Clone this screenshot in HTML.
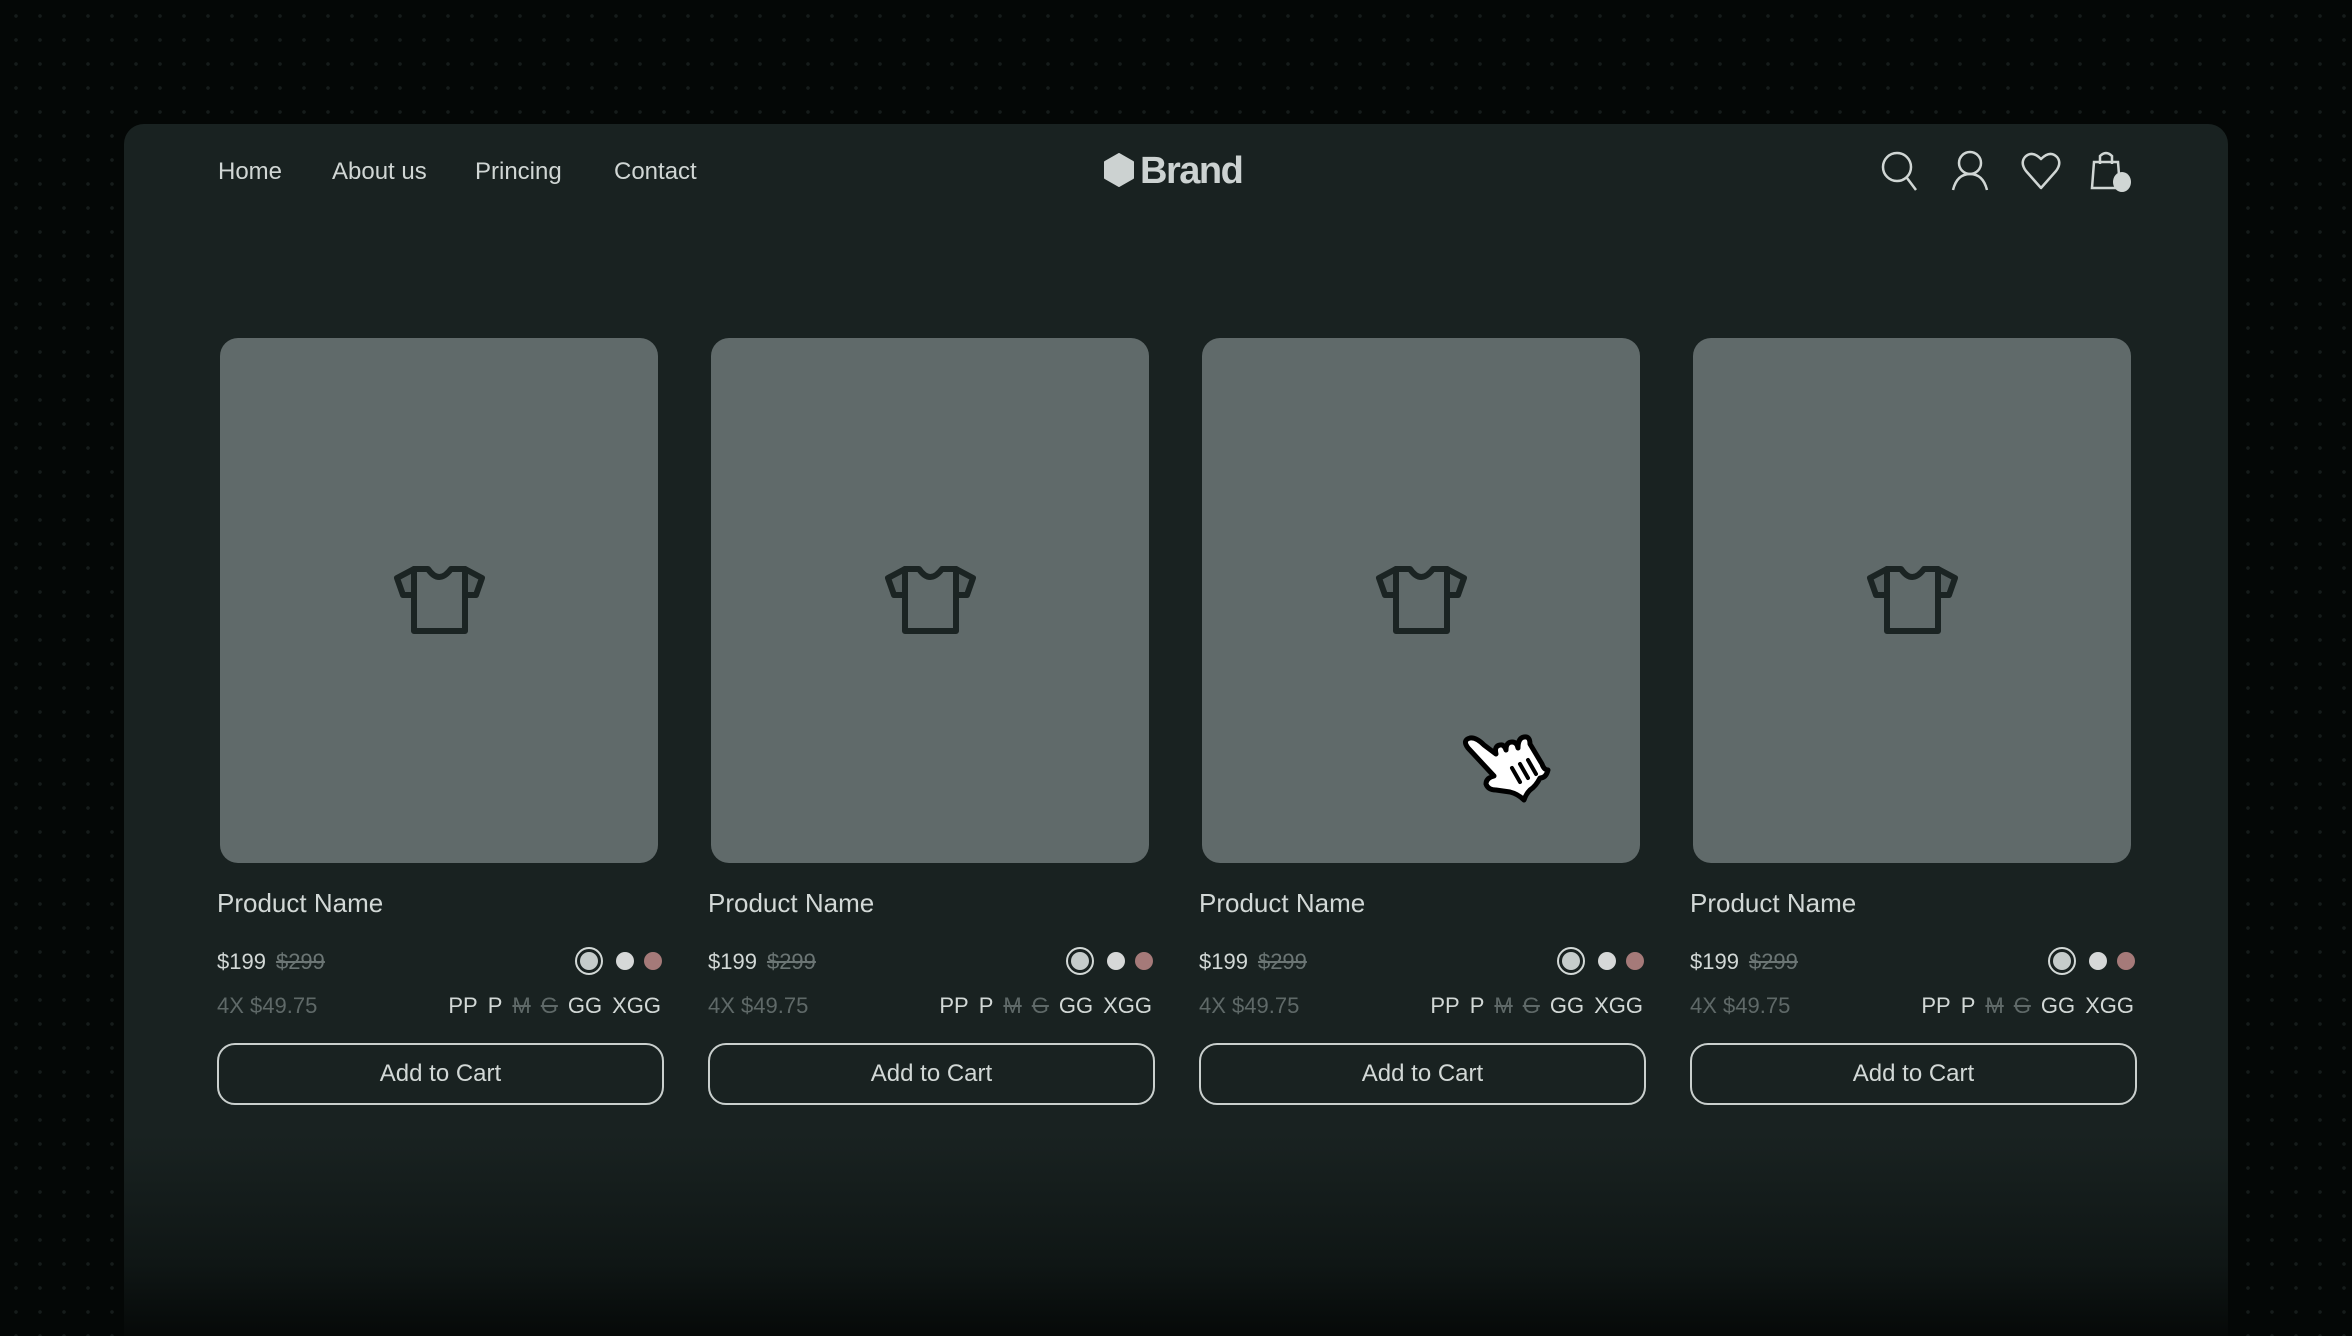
<!DOCTYPE html>
<html style="overflow:hidden"><head><meta charset="utf-8"><style>
*{margin:0;padding:0;box-sizing:border-box}
html,body{width:2352px;height:1336px;overflow:hidden}
body{background:#040706;font-family:"Liberation Sans",sans-serif;position:relative;
background-image:radial-gradient(circle,#161c1b 1.6px,transparent 2px);background-size:24px 24px;background-position:4px 4px}
.panel{position:absolute;left:124px;top:124px;width:2104px;height:1212px;border-radius:20px 20px 0 0;
background:linear-gradient(to bottom,#192221 0,#192221 1010px,#0f1615 1140px,#060908 1212px)}
.nav a{position:absolute;top:158px;color:#d0d6d4;font-size:24px;text-decoration:none}
.brand{position:absolute;left:1104px;top:150px;color:#ccd2d1;font-size:38px;font-weight:bold;letter-spacing:-1.5px}
.brand svg{vertical-align:-4px;margin-right:6px}
.icon{position:absolute;top:150px}
.card{position:absolute;top:338px;width:445px;height:770px}
.img{position:absolute;left:0;top:0;width:438px;height:525px;border-radius:18px;background:#606a6a}
.img svg{position:absolute;left:173px;top:227px}
.name{position:absolute;left:-3px;top:550px;color:#d2d8d6;font-size:26px}
.price{position:absolute;left:-3px;top:611px;font-size:22px;color:#d2d8d6}
.price s{color:#6b7574;margin-left:10px}
.inst{position:absolute;left:-3px;top:655px;font-size:22px;color:#5f6968}
.sizes{position:absolute;right:4px;top:655px;font-size:22px;color:#d2d8d6}
.sizes span{margin-left:10px}
.sizes s{color:#5f6968;margin-left:10px}
.sw{position:absolute;border-radius:50%}
.btn{position:absolute;left:-3px;top:705px;width:447px;height:62px;border:2px solid #c9cfcd;border-radius:18px;color:#d2d8d6;font-size:24px;text-align:center;line-height:58px}
</style></head><body>
<div class="panel"></div>
<div class="nav"><a style="left:218px">Home</a><a style="left:332px">About us</a><a style="left:475px">Princing</a><a style="left:614px">Contact</a></div>
<div class="brand"><svg width="30" height="34" viewBox="0 0 30 34"><path d="M15 1 L29 9 L29 25 L15 33 L1 25 L1 9 Z" fill="#ccd2d1" stroke="#ccd2d1" stroke-width="2" stroke-linejoin="round"/></svg>Brand</div>
<svg class="icon" style="left:1880px" width="40" height="42" viewBox="0 0 40 42" fill="none" stroke="#d0d6d4" stroke-width="2.5"><circle cx="17" cy="17" r="14"/><line x1="27" y1="28" x2="36" y2="40"/></svg>
<svg class="icon" style="left:1950px" width="40" height="42" viewBox="0 0 40 42" fill="none" stroke="#d0d6d4" stroke-width="2.5"><circle cx="20" cy="13" r="11"/><path d="M3 40 Q7 24 20 24 Q33 24 37 40"/></svg>
<svg class="icon" style="left:2020px" width="42" height="42" viewBox="0 0 42 42" fill="none" stroke="#d0d6d4" stroke-width="2.5"><path d="M21 38 L6 21 Q0 13 5 7 Q12 0 21 9 Q30 0 37 7 Q42 13 36 21 Z" stroke-linejoin="round"/></svg>
<svg class="icon" style="left:2088px;top:148px" width="48" height="48" viewBox="0 0 48 48" fill="none" stroke="#d0d6d4" stroke-width="2.5"><path d="M6 14 L30 14 L32 40 L4 40 Z"/><path d="M12 16 L12 8 Q18 2 24 8 L24 16"/><ellipse cx="34" cy="34" rx="9" ry="10" fill="#d0d6d4" stroke="none"/></svg>

<div class="card" style="left:220px">
<div class="img"><svg width="93" height="70" viewBox="0 0 93 70" fill="#566060" stroke="#1b2423" stroke-width="6" stroke-linejoin="round"><path d="M21 4 L4 13 L10 30 L21 30 Z"/><path d="M72 4 L89 13 L83 30 L72 30 Z"/><path d="M21 4 L35 4 Q46 20 58 4 L72 4 L72 66 L21 66 Z" fill="#606a6a"/></svg></div>
<div class="name">Product Name</div><div class="price">$199<s>$299</s></div>
<div class="sw" style="left:355px;top:609px;width:28px;height:28px;border:2px solid #d2d8d6;padding:3px"><div style="width:18px;height:18px;border-radius:50%;background:#c5cccb"></div></div>
<div class="sw" style="left:396px;top:614px;width:18px;height:18px;background:#d6d8d8"></div>
<div class="sw" style="left:424px;top:614px;width:18px;height:18px;background:#a57a79"></div>
<div class="inst">4X $49.75</div><div class="sizes">PP<span>P</span><s>M</s><s>G</s><span>GG</span><span>XGG</span></div>
<div class="btn">Add to Cart</div></div>

<div class="card" style="left:711px">
<div class="img"><svg width="93" height="70" viewBox="0 0 93 70" fill="#566060" stroke="#1b2423" stroke-width="6" stroke-linejoin="round"><path d="M21 4 L4 13 L10 30 L21 30 Z"/><path d="M72 4 L89 13 L83 30 L72 30 Z"/><path d="M21 4 L35 4 Q46 20 58 4 L72 4 L72 66 L21 66 Z" fill="#606a6a"/></svg></div>
<div class="name">Product Name</div><div class="price">$199<s>$299</s></div>
<div class="sw" style="left:355px;top:609px;width:28px;height:28px;border:2px solid #d2d8d6;padding:3px"><div style="width:18px;height:18px;border-radius:50%;background:#c5cccb"></div></div>
<div class="sw" style="left:396px;top:614px;width:18px;height:18px;background:#d6d8d8"></div>
<div class="sw" style="left:424px;top:614px;width:18px;height:18px;background:#a57a79"></div>
<div class="inst">4X $49.75</div><div class="sizes">PP<span>P</span><s>M</s><s>G</s><span>GG</span><span>XGG</span></div>
<div class="btn">Add to Cart</div></div>

<div class="card" style="left:1202px">
<div class="img"><svg width="93" height="70" viewBox="0 0 93 70" fill="#566060" stroke="#1b2423" stroke-width="6" stroke-linejoin="round"><path d="M21 4 L4 13 L10 30 L21 30 Z"/><path d="M72 4 L89 13 L83 30 L72 30 Z"/><path d="M21 4 L35 4 Q46 20 58 4 L72 4 L72 66 L21 66 Z" fill="#606a6a"/></svg></div>
<div class="name">Product Name</div><div class="price">$199<s>$299</s></div>
<div class="sw" style="left:355px;top:609px;width:28px;height:28px;border:2px solid #d2d8d6;padding:3px"><div style="width:18px;height:18px;border-radius:50%;background:#c5cccb"></div></div>
<div class="sw" style="left:396px;top:614px;width:18px;height:18px;background:#d6d8d8"></div>
<div class="sw" style="left:424px;top:614px;width:18px;height:18px;background:#a57a79"></div>
<div class="inst">4X $49.75</div><div class="sizes">PP<span>P</span><s>M</s><s>G</s><span>GG</span><span>XGG</span></div>
<div class="btn">Add to Cart</div></div>

<div class="card" style="left:1693px">
<div class="img"><svg width="93" height="70" viewBox="0 0 93 70" fill="#566060" stroke="#1b2423" stroke-width="6" stroke-linejoin="round"><path d="M21 4 L4 13 L10 30 L21 30 Z"/><path d="M72 4 L89 13 L83 30 L72 30 Z"/><path d="M21 4 L35 4 Q46 20 58 4 L72 4 L72 66 L21 66 Z" fill="#606a6a"/></svg></div>
<div class="name">Product Name</div><div class="price">$199<s>$299</s></div>
<div class="sw" style="left:355px;top:609px;width:28px;height:28px;border:2px solid #d2d8d6;padding:3px"><div style="width:18px;height:18px;border-radius:50%;background:#c5cccb"></div></div>
<div class="sw" style="left:396px;top:614px;width:18px;height:18px;background:#d6d8d8"></div>
<div class="sw" style="left:424px;top:614px;width:18px;height:18px;background:#a57a79"></div>
<div class="inst">4X $49.75</div><div class="sizes">PP<span>P</span><s>M</s><s>G</s><span>GG</span><span>XGG</span></div>
<div class="btn">Add to Cart</div></div>

<svg style="position:absolute;left:1460px;top:720px" width="110" height="100" viewBox="0 0 110 100">
<path d="M8 28 Q2 20 10 18 Q16 17 24 25 L36 34 Q34 26 40 25 Q44 24 46 30 Q46 22 52 22 Q57 22 58 28 Q58 18 64 17 Q70 16 70 24 L76 34 L82 44 Q84 50 88 50 Q86 58 80 58 Q76 66 70 70 Q66 74 64 80 Q58 74 50 72 L36 70 Q28 70 26 64 Q26 58 34 56 Z" fill="#fff" stroke="#000" stroke-width="5" stroke-linejoin="round"/>
<g stroke="#000" stroke-width="4" stroke-linecap="round"><line x1="52" y1="48" x2="60" y2="62"/><line x1="60" y1="44" x2="68" y2="58"/><line x1="68" y1="40" x2="76" y2="54"/></g>
</svg>
</body></html>
